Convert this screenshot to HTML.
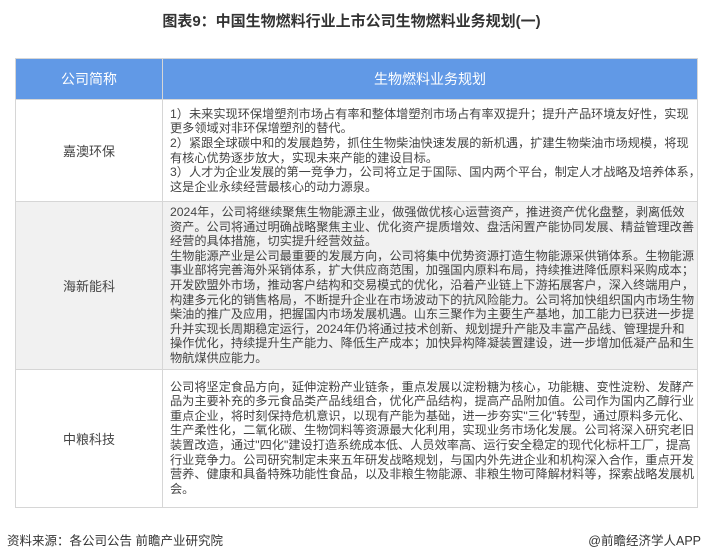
<!DOCTYPE html>
<html><head><meta charset="utf-8"><style>
html,body{margin:0;padding:0;background:#fff;width:703px;height:559px;overflow:hidden}
body{font-family:"Liberation Sans","Noto Sans CJK SC",sans-serif;color:#444;position:relative}
.title{position:absolute;top:10px;left:0;width:703px;text-align:center;font-size:15px;font-weight:bold;color:#333}
table{position:absolute;left:15px;top:58px;width:682px;border-collapse:collapse;table-layout:fixed}
td,th{border:1px solid #d6d6d6;padding:0;overflow:hidden}
th{background:#6199e6;color:#fff;font-weight:normal;font-size:14px;height:40px}
td.n{text-align:center;font-size:13px;color:#444}
td.t{font-size:12.2px;line-height:14.6px;padding:3px 2px 3px 7px;white-space:nowrap;color:#444}
tr.g td{background:#f1f1f1}
.foot{position:absolute;top:530px;font-size:12.5px;color:#333}
</style></head><body>
<div class="title">图表9：中国生物燃料行业上市公司生物燃料业务规划(一)</div>
<table>
<colgroup><col style="width:147px"><col style="width:535px"></colgroup>
<tr><th>公司简称</th><th>生物燃料业务规划</th></tr>
<tr style="height:102px"><td class="n">嘉澳环保</td><td class="t">1）未来实现环保增塑剂市场占有率和整体增塑剂市场占有率双提升；提升产品环境友好性，实现<br>更多领域对非环保增塑剂的替代。<br>2）紧跟全球碳中和的发展趋势，抓住生物柴油快速发展的新机遇，扩建生物柴油市场规模，将现<br>有核心优势逐步放大，实现未来产能的建设目标。<br>3）人才为企业发展的第一竞争力，公司将立足于国际、国内两个平台，制定人才战略及培养体系，<br>这是企业永续经营最核心的动力源泉。</td></tr>
<tr class="g" style="height:166px"><td class="n">海新能科</td><td class="t">2024年，公司将继续聚焦生物能源主业，做强做优核心运营资产，推进资产优化盘整，剥离低效<br>资产。公司将通过明确战略聚焦主业、优化资产提质增效、盘活闲置产能协同发展、精益管理改善<br>经营的具体措施，切实提升经营效益。<br>生物能源产业是公司最重要的发展方向，公司将集中优势资源打造生物能源采供销体系。生物能源<br>事业部将完善海外采销体系，扩大供应商范围，加强国内原料布局，持续推进降低原料采购成本；<br>开发欧盟外市场，推动客户结构和交易模式的优化，沿着产业链上下游拓展客户，深入终端用户，<br>构建多元化的销售格局，不断提升企业在市场波动下的抗风险能力。公司将加快组织国内市场生物<br>柴油的推广及应用，把握国内市场发展机遇。山东三聚作为主要生产基地，加工能力已获进一步提<br>升并实现长周期稳定运行，2024年仍将通过技术创新、规划提升产能及丰富产品线、管理提升和<br>操作优化，持续提升生产能力、降低生产成本；加快异构降凝装置建设，进一步增加低凝产品和生<br>物航煤供应能力。</td></tr>
<tr style="height:138px"><td class="n">中粮科技</td><td class="t">公司将坚定食品方向，延伸淀粉产业链条，重点发展以淀粉糖为核心，功能糖、变性淀粉、发酵产<br>品为主要补充的多元食品类产品线组合，优化产品结构，提高产品附加值。公司作为国内乙醇行业<br>重点企业，将时刻保持危机意识，以现有产能为基础，进一步夯实"三化"转型，通过原料多元化、<br>生产柔性化，二氧化碳、生物饲料等资源最大化利用，实现业务市场化发展。公司将深入研究老旧<br>装置改造，通过"四化"建设打造系统成本低、人员效率高、运行安全稳定的现代化标杆工厂，提高<br>行业竞争力。公司研究制定未来五年研发战略规划，与国内外先进企业和机构深入合作，重点开发<br>营养、健康和具备特殊功能性食品，以及非粮生物能源、非粮生物可降解材料等，探索战略发展机<br>会。</td></tr>
</table>
<div class="foot" style="left:7px">资料来源：各公司公告 前瞻产业研究院</div>
<div class="foot" style="right:2px">@前瞻经济学人APP</div>
</body></html>
